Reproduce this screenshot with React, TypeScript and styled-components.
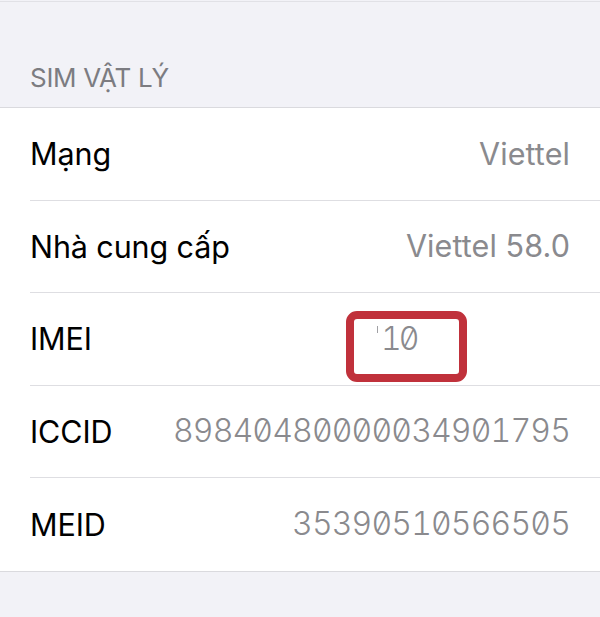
import React from 'react';
import styled, { createGlobalStyle } from 'styled-components';

const GlobalStyle = createGlobalStyle`
  html, body {
    margin: 0;
    padding: 0;
    background: #f2f2f7;
  }
  body {
    font-family: Inter, "Noto Sans", "Liberation Sans", sans-serif;
    -webkit-font-smoothing: antialiased;
  }
`;

interface Field {
  label: string;
  value: string;
  mono?: boolean;
  masked?: boolean;
}

const fields: Field[] = [
  { label: 'Mạng', value: 'Viettel' },
  { label: 'Nhà cung cấp', value: 'Viettel 58.0' },
  { label: 'IMEI', value: '10', mono: true, masked: true },
  { label: 'ICCID', value: '89840480000034901795', mono: true },
  { label: 'MEID', value: '35390510566505', mono: true },
];

const App = () => {
  return (
    <Screen>
      <GlobalStyle />
      <Page>
        <SectionHeader>SIM VẬT LÝ</SectionHeader>
        <Group>
          {fields.map((f, i) => (
            <Row key={f.label}>
              <RowBody last={i === fields.length - 1}>
                <Label>{f.label}</Label>
                {f.masked ? (
                  <MaskFrame>
                    <Tick />
                    <Value mono>{f.value}</Value>
                  </MaskFrame>
                ) : (
                  <Value mono={f.mono}>{f.value}</Value>
                )}
              </RowBody>
            </Row>
          ))}
        </Group>
      </Page>
    </Screen>
  );
};

const Screen = styled.div`
  padding-top: 1px;
  min-height: 617px;
  box-sizing: border-box;
`;

const Page = styled.div`
  border-top: 1px solid #e1e1e6;
`;

const SectionHeader = styled.div`
  height: 105px;
  box-sizing: border-box;
  display: flex;
  align-items: flex-end;
  padding: 0 30px 14px;
  font-size: 26px;
  line-height: 30px;
  color: #7c7c81;
  letter-spacing: -0.3px;
`;

const Group = styled.div`
  background: #fff;
  border-top: 1px solid #dadade;
  border-bottom: 1px solid #dadade;
`;

const Row = styled.div`
  padding-left: 30px;
`;

const RowBody = styled.div<{ last?: boolean }>`
  display: flex;
  align-items: center;
  box-sizing: border-box;
  height: 92.5px;
  padding-right: 30px;
  border-bottom: ${(p) => (p.last ? 'none' : '1px solid #dedee2')};
`;

const Label = styled.span`
  font-size: 30.5px;
  color: #000;
  letter-spacing: -0.1px;
  white-space: nowrap;
`;

const Value = styled.span<{ mono?: boolean }>`
  margin-left: auto;
  font-size: ${(p) => (p.mono ? '32px' : '30.5px')};
  line-height: 1;
  color: #8a8a8e;
  white-space: nowrap;
  letter-spacing: ${(p) => (p.mono ? '-0.85px' : '0.1px')};
  font-variant-numeric: ${(p) => (p.mono ? 'tabular-nums slashed-zero' : 'normal')};
  font-weight: ${(p) => (p.mono ? 300 : 400)};
`;

const MaskFrame = styled.div`
  margin: 15px 103px 0 auto;
  width: 121px;
  height: 71px;
  box-sizing: border-box;
  border: 8px solid #c0313b;
  border-radius: 11px;
  display: flex;
  align-items: flex-start;
  padding-left: 23px;

  ${Value} {
    margin: 4px 0 0 3px;
    letter-spacing: -3px;
  }
`;

const Tick = styled.span`
  width: 1px;
  height: 7px;
  margin-top: 7px;
  background: #a0a0a4;
`;

export default App;
